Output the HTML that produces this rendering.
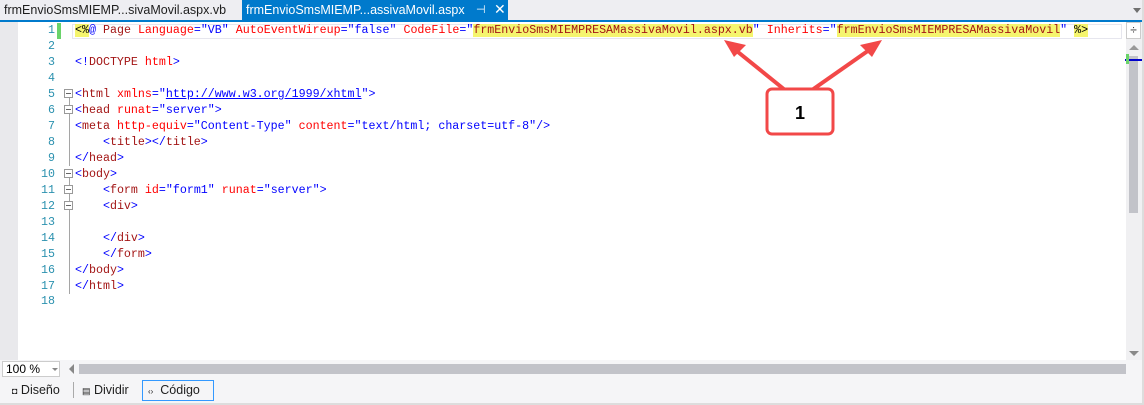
<!DOCTYPE html>
<html><head><meta charset="utf-8"><style>
body{margin:0;width:1144px;height:405px;background:#f5f5f7;position:relative;overflow:hidden;font-family:"Liberation Sans",sans-serif}
.tabbar{position:absolute;left:0;top:0;width:1144px;height:20px;background:#eeeef2}
.t1{position:absolute;left:4px;top:3px;font-size:12.5px;color:#1e1e1e}
.t2{position:absolute;left:242px;top:0;width:266px;height:20px;background:#007acc;color:#fff;font-size:12.5px}
.blue{position:absolute;left:0;top:20px;width:1144px;height:2px;background:#007acc}
.ed{position:absolute;left:18px;top:22px;width:1108px;height:338px;background:#fff}
.gut{position:absolute;left:0;top:22px;width:18px;height:338px;background:#e9e9ec}
.code{position:absolute;left:0;top:23px;font-family:"Liberation Mono",monospace;font-size:11.65px;line-height:15.95px;white-space:pre}
.ln{position:absolute;left:20px;width:35px;text-align:right;color:#2b91af}
.tx{position:absolute;left:75px}
.b{color:#0000ff}.m{color:#a31515}.r{color:#ff0000}.k{color:#000}
.hl{background:#f5f56e}
.sb{position:absolute;left:1126px;top:22px;width:16px;height:338px;background:#f0f0f2}
.box{position:absolute;border:1px solid #ccc}
</style></head><body>
<div class="tabbar"></div>
<div class="t1">frmEnvioSmsMIEMP...sivaMovil.aspx.vb</div>
<div class="t2"><span style="position:absolute;left:4px;top:3px">frmEnvioSmsMIEMP...assivaMovil.aspx</span><span style="position:absolute;left:234px;top:3px;font-size:11px">⊣</span><span style="position:absolute;left:252px;top:1px;font-size:14px">✕</span></div>
<div style="position:absolute;left:1133px;top:8px;border:4px solid transparent;border-top:5px solid #707070;border-bottom:0"></div>
<div class="blue"></div>
<div class="gut"></div>
<div class="ed"></div>
<div style="position:absolute;left:72px;top:24px;width:1050px;height:15px;border:1px solid #e6e6ee;box-sizing:border-box"></div>
<div style="position:absolute;left:57px;top:23px;width:4px;height:16px;background:#6ad36a"></div>
<div style="position:absolute;left:69px;top:96px;width:1px;height:70px;background:#a5a5a5"></div>
<div style="position:absolute;left:69px;top:176px;width:1px;height:118px;background:#a5a5a5"></div>
<div class="code">
<div class="ln" style="top:0">1</div><div class="ln" style="top:16px">2</div><div class="ln" style="top:32px">3</div><div class="ln" style="top:48px">4</div><div class="ln" style="top:64px">5</div><div class="ln" style="top:80px">6</div><div class="ln" style="top:96px">7</div><div class="ln" style="top:112px">8</div><div class="ln" style="top:128px">9</div><div class="ln" style="top:144px">10</div><div class="ln" style="top:160px">11</div><div class="ln" style="top:176px">12</div><div class="ln" style="top:192px">13</div><div class="ln" style="top:208px">14</div><div class="ln" style="top:224px">15</div><div class="ln" style="top:240px">16</div><div class="ln" style="top:256px">17</div><div class="ln" style="top:271px">18</div>
<div class="tx" style="top:0"><span class="hl k">&lt;%</span><span class="b">@</span> <span class="m">Page</span> <span class="r">Language</span><span class="b">="VB"</span> <span class="r">AutoEventWireup</span><span class="b">="false"</span> <span class="r">CodeFile</span><span class="b">="</span><span class="hl m">frmEnvioSmsMIEMPRESAMassivaMovil.aspx.vb</span><span class="b">"</span> <span class="r">Inherits</span><span class="b">="</span><span class="hl m">frmEnvioSmsMIEMPRESAMassivaMovil</span><span class="b">"</span> <span class="hl k">%&gt;</span></div>
<div class="tx" style="top:32px"><span class="b">&lt;!</span><span class="m">DOCTYPE</span> <span class="r">html</span><span class="b">&gt;</span></div>
<div class="tx" style="top:64px"><span class="b">&lt;</span><span class="m">html</span> <span class="r">xmlns</span><span class="b">="<u>http://www.w3.org/1999/xhtml</u>"&gt;</span></div>
<div class="tx" style="top:80px"><span class="b">&lt;</span><span class="m">head</span> <span class="r">runat</span><span class="b">="server"&gt;</span></div>
<div class="tx" style="top:96px"><span class="b">&lt;</span><span class="m">meta</span> <span class="r">http-equiv</span><span class="b">="Content-Type"</span> <span class="r">content</span><span class="b">="text/html; charset=utf-8"/&gt;</span></div>
<div class="tx" style="top:112px">    <span class="b">&lt;</span><span class="m">title</span><span class="b">&gt;&lt;/</span><span class="m">title</span><span class="b">&gt;</span></div>
<div class="tx" style="top:128px"><span class="b">&lt;/</span><span class="m">head</span><span class="b">&gt;</span></div>
<div class="tx" style="top:144px"><span class="b">&lt;</span><span class="m">body</span><span class="b">&gt;</span></div>
<div class="tx" style="top:160px">    <span class="b">&lt;</span><span class="m">form</span> <span class="r">id</span><span class="b">="form1"</span> <span class="r">runat</span><span class="b">="server"&gt;</span></div>
<div class="tx" style="top:176px">    <span class="b">&lt;</span><span class="m">div</span><span class="b">&gt;</span></div>
<div class="tx" style="top:208px">    <span class="b">&lt;/</span><span class="m">div</span><span class="b">&gt;</span></div>
<div class="tx" style="top:224px">    <span class="b">&lt;/</span><span class="m">form</span><span class="b">&gt;</span></div>
<div class="tx" style="top:240px"><span class="b">&lt;/</span><span class="m">body</span><span class="b">&gt;</span></div>
<div class="tx" style="top:256px"><span class="b">&lt;/</span><span class="m">html</span><span class="b">&gt;</span></div>
</div>
<svg style="position:absolute;left:0;top:0" width="1144" height="405">
<g fill="#fff" stroke="#999" stroke-width="1">
<rect x="64.5" y="89.5" width="8" height="8"/><rect x="64.5" y="105.5" width="8" height="8"/><rect x="64.5" y="169.5" width="8" height="8"/><rect x="64.5" y="185.5" width="8" height="8"/><rect x="64.5" y="201.5" width="8" height="8"/></g>
<g stroke="#666" stroke-width="1"><line x1="66" y1="93.5" x2="71" y2="93.5"/><line x1="66" y1="109.5" x2="71" y2="109.5"/><line x1="66" y1="173.5" x2="71" y2="173.5"/><line x1="66" y1="189.5" x2="71" y2="189.5"/><line x1="66" y1="205.5" x2="71" y2="205.5"/></g>
<g stroke="#f24848" stroke-width="4" fill="#f24848">
<line x1="785" y1="90" x2="733" y2="48"/><line x1="812" y1="90" x2="872" y2="48"/></g>
<polygon points="724,40 746,45 734,57" fill="#f24848"/>
<polygon points="882,40 860,45 872,57" fill="#f24848"/>
<rect x="767" y="89" width="66" height="45" rx="5" fill="#fff" stroke="#f24848" stroke-width="3"/>
<text x="800" y="119" font-family="Liberation Sans" font-size="18" font-weight="bold" text-anchor="middle">1</text>
</svg>
<div class="sb"></div>
<div style="position:absolute;left:1126px;top:22px;width:15px;height:17px;border:1px solid #ccc;background:#fff;box-sizing:border-box;text-align:center;font-size:12px;line-height:15px;color:#333">÷</div>
<div style="position:absolute;left:1129px;top:45px;border:5px solid transparent;border-bottom:5px solid #999;border-top:0"></div>
<div style="position:absolute;left:1129px;top:56px;width:9px;height:157px;background:#c2c3c9"></div>
<div style="position:absolute;left:1125px;top:59px;width:17px;height:2px;background:#0000cc"></div>
<div style="position:absolute;left:1126px;top:54px;width:3px;height:10px;background:#6ad36a"></div>
<div style="position:absolute;left:1129px;top:351px;border:5px solid transparent;border-top:5px solid #888;border-bottom:0"></div>
<div style="position:absolute;left:1142px;top:0;width:2px;height:405px;background:#ddd"></div>
<div style="position:absolute;left:2px;top:361px;width:58px;height:16px;background:#fff;border:1px solid #ccc;box-sizing:border-box;font-size:12px;line-height:14px;padding-left:3px">100 %</div>
<div style="position:absolute;left:52px;top:368px;border:3px solid transparent;border-top:3px solid #888"></div>
<div style="position:absolute;left:69px;top:364px;border:5px solid transparent;border-right:5px solid #888;border-left:0"></div>
<div style="position:absolute;left:79px;top:364px;width:1047px;height:10px;background:#c2c3c9"></div>
<div style="position:absolute;left:0;top:403px;width:1144px;height:2px;background:#ddd"></div>
<div style="position:absolute;left:12px;top:383px;font-size:12.5px;color:#1e1e1e"><span style="font-size:9px">◘</span> Diseño</div>
<div style="position:absolute;left:73px;top:382px;width:1px;height:16px;background:#aaa"></div>
<div style="position:absolute;left:82px;top:383px;font-size:12.5px;color:#1e1e1e"><span style="font-size:9px">▤</span> Dividir</div>
<div style="position:absolute;left:142px;top:380px;width:72px;height:21px;border:1px solid #3399ff;box-sizing:border-box;font-size:12.5px;color:#1e1e1e;padding:2px 0 0 5px"><span style="font-size:8px">‹›</span>&nbsp; Código</div>
</body></html>
